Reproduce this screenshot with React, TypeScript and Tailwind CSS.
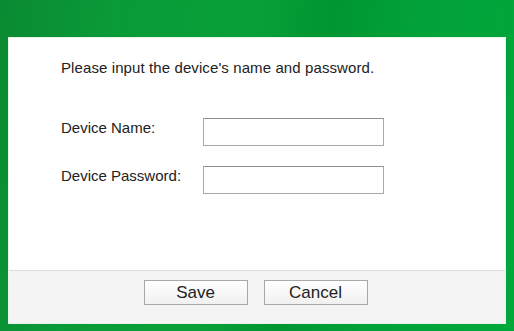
import React from "react";

const font = { fontFamily: '"Liberation Sans", Arial, sans-serif' };

export default function App() {
  return (
    <div
      className="w-[514px] h-[331px] flex flex-col pt-[37px] px-[8px] pb-[7px] bg-[linear-gradient(100deg,#0a8a32_0%,#0a9a38_20%,#07a038_45%,#009632_58%,#02a23a_75%,#00a83a_100%)]"
      style={font}
    >
      <div className="flex-1 flex flex-col bg-white border border-[#e6f3ea]">
        {/* body */}
        <div className="flex-1 pl-[52px] pt-[21px] text-[15px] text-[#222]">
          <p className="leading-[17px] tracking-[0.1px]">Please input the device's name and password.</p>

          <div className="mt-[42px] flex flex-col gap-[20px]">
            <div className="flex items-center">
              <label className="w-[142px] leading-[17px] -mt-[9px]">Device Name:</label>
              <input
                type="text"
                className="w-[181px] h-[28px] bg-white border border-[#a9a9a9] border-t-[#8f8f8f] outline-none"
              />
            </div>
            <div className="flex items-center">
              <label className="w-[142px] leading-[17px] -mt-[9px]">Device Password:</label>
              <input
                type="password"
                className="w-[181px] h-[28px] bg-white border border-[#a9a9a9] border-t-[#8f8f8f] outline-none"
              />
            </div>
          </div>
        </div>

        {/* footer */}
        <div className="h-[53px] border-t border-[#dcdcdc] bg-[#f4f4f4] flex justify-center items-start pt-[9px] gap-[16px] pr-[3px]">
          <button className="w-[104px] h-[25px] border border-[#a8a8a8] bg-[linear-gradient(#ffffff,#f0f0f0)] text-[17px] text-[#222] leading-none">
            Save
          </button>
          <button className="w-[104px] h-[25px] border border-[#a8a8a8] bg-[linear-gradient(#ffffff,#f0f0f0)] text-[17px] text-[#222] leading-none">
            Cancel
          </button>
        </div>
      </div>
    </div>
  );
}
